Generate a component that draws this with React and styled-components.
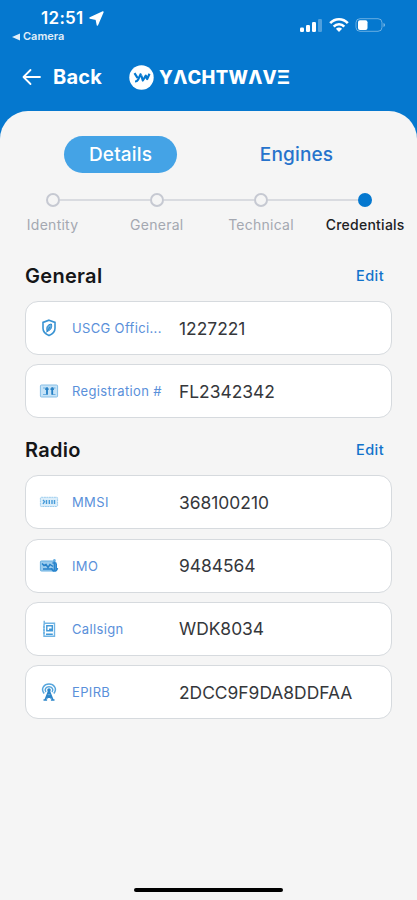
import React from 'react';
import styled, { createGlobalStyle } from 'styled-components';

const GlobalStyle = createGlobalStyle`
  * {
    box-sizing: border-box;
  }
  body {
    background-color: #f5f5f5;
    font-family: Inter, 'Liberation Sans', sans-serif;
    margin: 0;
  }
`;
const Screen = styled.div`
  background: linear-gradient(#0578cf 0, #0578cf 140px, #f5f5f5 140px);
  display: flex;
  flex-direction: column;
  height: 900px;
  overflow: hidden;
  width: 417px;
`;
const StatusBar = styled.div`
  color: #ffffff;
  display: flex;
  height: 48px;
  justify-content: space-between;
  padding: 8px 31px 0 12px;
`;
const Clock = styled.div`
  align-items: center;
  display: flex;
  font-size: 17px;
  font-weight: 600;
  gap: 5px;
  letter-spacing: 0.3px;
  line-height: 20px;
  padding-left: 29px;
`;
const ReturnLink = styled.div`
  align-items: center;
  display: flex;
  font-size: 11px;
  font-weight: 600;
  gap: 3px;
  line-height: 17px;
  opacity: 0.88;
`;
const StatusIcons = styled.div`
  align-items: center;
  display: flex;
  gap: 6px;
  height: 34px;
`;
const NavBar = styled.div`
  align-items: center;
  color: #ffffff;
  display: flex;
  height: 58px;
  padding-left: 22px;
`;
const BackLabel = styled.span`
  font-size: 20px;
  font-weight: 700;
  letter-spacing: 0.2px;
  margin: 0 27px 0 12px;
`;
const Wordmark = styled.span`
  font-size: 18.4px;
  font-weight: 800;
  letter-spacing: 0.3px;
  margin-left: 5px;
`;
const Sheet = styled.main`
  background-color: #f5f5f5;
  border-radius: 28px 28px 0 0;
  display: flex;
  flex: 1;
  flex-direction: column;
  margin-top: 5px;
  padding: 25px 25px 8px;
`;
const Tabs = styled.div`
  display: flex;
  gap: 63px;
  padding-left: 39px;
`;
const Tab = styled.div`
  background-color: ${props => props.$active ? '#44a3e6' : 'transparent'};
  border-radius: 19px;
  color: ${props => props.$active ? '#ffffff' : '#2673cc'};
  font-size: 19px;
  font-weight: 500;
  height: 37px;
  letter-spacing: 0.15px;
  line-height: 38px;
  text-align: center;
  width: 113px;
`;
const Steps = styled.div`
  display: grid;
  grid-template-columns: repeat(4, 104.2px);
  margin: 20px -25px 0 -24.5px;
`;
const Step = styled.div`
  align-items: center;
  color: ${props => props.$active ? '#202124' : '#a4a8b1'};
  display: flex;
  flex-direction: column;
  font-size: 14px;
  font-weight: ${props => props.$active ? 500 : 400};
  gap: 9px;
  letter-spacing: 0.25px;
  line-height: 18px;
`;
const StepTrack = styled.div`
  align-items: center;
  display: flex;
  width: 100%;
`;
const StepLine = styled.div`
  background-color: ${props => props.$hidden ? 'transparent' : '#d9dbe0'};
  flex: 1;
  height: 1.5px;
`;
const StepDot = styled.div`
  background-color: ${props => props.$active ? '#0578cf' : '#f5f5f5'};
  border: 2px solid ${props => props.$active ? '#0578cf' : '#c6c9d2'};
  border-radius: 50%;
  height: 14px;
  width: 14px;
`;
const Section = styled.section`
  margin-top: ${props => props.$first ? '27px' : '17px'};
`;
const SectionHead = styled.div`
  align-items: center;
  display: flex;
  height: 30px;
  justify-content: space-between;
  padding-right: 8px;
`;
const SectionTitle = styled.h2`
  color: #151618;
  font-size: 20px;
  font-weight: 600;
  letter-spacing: 0.3px;
  margin: 0;
`;
const Edit = styled.span`
  color: #1172cb;
  font-size: 14.5px;
  font-weight: 500;
  letter-spacing: 0.4px;
  line-height: 16px;
  padding-bottom: 1px;
`;
const Rows = styled.div`
  display: flex;
  flex-direction: column;
  gap: 9.3px;
  margin-top: 10px;
`;
const Row = styled.div`
  align-items: center;
  background-color: #ffffff;
  border: 1px solid #d6dade;
  border-radius: 13px;
  display: grid;
  grid-template-columns: 20px 106px 1fr;
  height: 54px;
  padding-left: 13px;
  width: 367px;
`;
const RowLabel = styled.span`
  color: #5a90da;
  font-size: 13px;
  letter-spacing: 0.35px;
  padding-left: 13px;
  white-space: nowrap;
`;
const RowValue = styled.span`
  color: #35373b;
  font-size: 17.4px;
  padding-left: 14px;
`;
const HomeIndicator = styled.div`
  align-self: center;
  background-color: #000000;
  border-radius: 2px;
  height: 4px;
  margin-top: auto;
  width: 149px;
`;

const Signal = () => (
  <svg width="23" height="16" viewBox="0 0 23 16" fill="#fff">
    <rect x="0" y="10.5" width="4" height="4.5" rx="1.2" />
    <rect x="6" y="8" width="4" height="7" rx="1.2" />
    <rect x="12" y="5" width="4" height="10" rx="1.2" />
    <rect x="18" y="2" width="4" height="13" rx="1.2" opacity="0.3" />
  </svg>
);

const Wifi = () => (
  <svg width="20" height="16" viewBox="0 0 20 16" fill="none" stroke="#fff" strokeWidth="2.6">
    <path d="M1.2 6.2C6 .9 14 .9 18.8 6.2M4.7 9.6c2.8-3.1 7.8-3.1 10.6 0" />
    <path d="M6.9 11.8c1.7-1.7 4.5-1.7 6.2 0L10 15z" fill="#fff" stroke="none" />
  </svg>
);

const Battery = () => (
  <svg width="31" height="16" viewBox="0 0 31 16">
    <rect x="1" y="1.7" width="26" height="12.6" rx="4" fill="none" stroke="#fff" opacity="0.4" />
    <rect x="3" y="3.2" width="9.5" height="9.8" rx="2" fill="#fff" />
    <path d="M28.5 6v4c2-.7 2-3.3 0-4z" fill="#fff" opacity="0.5" />
  </svg>
);

const LocationArrow = () => (
  <svg width="15" height="15" viewBox="0 0 15 15">
    <path d="M14 1 8.4 14 7.2 8.2 1 7z" fill="#fff" stroke="#fff" strokeWidth="1.4" strokeLinejoin="round" />
  </svg>
);

const BackArrow = () => (
  <svg width="19" height="18" viewBox="0 0 19 18" fill="none" stroke="#fff" strokeWidth="1.8" strokeLinecap="round" strokeLinejoin="round">
    <path d="M18 9H2M8.5 2 1.5 9l7 7" />
  </svg>
);

const Emblem = () => (
  <svg width="25" height="25" viewBox="0 0 25 25" fill="none">
    <circle cx="12.5" cy="12.5" r="12.2" fill="#fff" />
    <path d="m5.5 8.2 3 4.6M12 8.5l-3 6.2c-.7 1.4-1.7 1.8-3 1.8M12.3 10.5l1.5 5 3-4.8 1.4 3.3 2.3-5.2" stroke="#0578cf" strokeWidth="2.2" strokeLinejoin="round" />
  </svg>
);

const icons = {
  shield: (
    <>
      <path d="M10 2.2 16 4.4v5.8c0 3.8-3.4 6.3-6 7.4-2.6-1.1-6-3.6-6-7.4V4.4z" stroke="#3993d3" strokeWidth="1.6" />
      <path d="M12.4 6c-3.8.5-5.4 2.9-4.3 7.4 4-1.4 5.2-3.8 4.3-7.4zM7.3 14.5 11 9" fill="#64afe0" stroke="#2a86cb" />
    </>
  ),
  plate: (
    <>
      <rect x="1.4" y="4" width="17.2" height="12" rx="1" fill="#c6e3f7" stroke="#87bfe7" />
      <path d="M4 7h3M13.5 7h3M4 13.5h3M13.5 13.5h3" stroke="#6cb0e1" />
      <path d="M8 6.3v7.5M6.2 8.2h3.4M13.2 6.3v7.5M11.5 8.2h3.4" stroke="#257fc4" strokeWidth="1.8" />
    </>
  ),
  digits: (
    <>
      <rect x="1.4" y="5.3" width="17.2" height="9.2" rx="1" fill="#dceefa" stroke="#9dcdef" strokeDasharray="2 .5" />
      <path d="m4 8 1.5 1.5L4 12M7.5 8v4M10.3 8v4M13 8v4M15.5 8v4" stroke="#479bd9" strokeWidth="1.4" />
    </>
  ),
  imo: (
    <>
      <rect x="1.4" y="5" width="14.5" height="10" rx="1" fill="#9bcbed" stroke="#68afe1" />
      <path d="m3 7.5 2 2 2-1 2 3 2-3 3 2M4 13h9" stroke="#2680c8" strokeWidth="1.5" />
      <path d="M15.4 4.5v11.3M13.4 7h4M12.5 12c1 4 5 4 6 0M17.2 7.5v6" stroke="#2a85cd" strokeWidth="1.6" />
      <circle cx="15.4" cy="4.4" r="1.3" fill="#67afe2" />
    </>
  ),
  radio: (
    <>
      <path d="M5 17.3V5.5l1-1.3h9.5v13zM5.2 5V1.8M4 8h2M4 11h2M4 14h2" stroke="#70b4e4" strokeWidth="1.4" />
      <path d="M7.8 6.7h5.5v5H7.8zM10 10.3h3M7 15.2h6.8" stroke="#4299d8" strokeWidth="1.4" />
    </>
  ),
  beacon: (
    <>
      <path d="M5.2 11.5c-4-5 .2-9.4 4.8-9.4s8.8 4.4 4.8 9.4M7 10c-2.2-2.7.2-5.2 3-5.2s5.2 2.5 3 5.2" stroke="#56a5dc" strokeWidth="1.5" />
      <circle cx="10" cy="8" r="1.8" fill="#2b85c9" />
      <path d="m10 8-3.8 9.5M10 8l3.8 9.5M7.8 13l4.7 3.5M12.2 13l-4.7 3.5M4.5 18h3.6M11.9 18h3.6M10 9v5" stroke="#2b85c9" strokeWidth="1.4" />
    </>
  ),
};

const RowIcon = ({ name }) => (
  <svg width="20" height="20" viewBox="0 0 20 20" fill="none">{ icons[name] }</svg>
);

const steps = ['Identity', 'General', 'Technical', 'Credentials'];

const sections = [
  {
    title: 'General',
    rows: [
      { icon: 'shield', label: 'USCG Offici...', value: '1227221' },
      { icon: 'plate', label: 'Registration #', value: 'FL2342342' },
    ],
  },
  {
    title: 'Radio',
    rows: [
      { icon: 'digits', label: 'MMSI', value: '368100210' },
      { icon: 'imo', label: 'IMO', value: '9484564' },
      { icon: 'radio', label: 'Callsign', value: 'WDK8034' },
      { icon: 'beacon', label: 'EPIRB', value: '2DCC9F9DA8DDFAA' },
    ],
  },
];

const App = () => (
  <>
    <GlobalStyle />
    <Screen>
      <StatusBar>
        <div>
          <Clock>12:51 <LocationArrow /></Clock>
          <ReturnLink>
            <svg width="8" height="8" viewBox="0 0 8 8"><path d="M8 .5v7L0 4z" fill="#fff" /></svg>
            Camera
          </ReturnLink>
        </div>
        <StatusIcons>
          <Signal />
          <Wifi />
          <Battery />
        </StatusIcons>
      </StatusBar>
      <NavBar>
        <BackArrow />
        <BackLabel>Back</BackLabel>
        <Emblem />
        <Wordmark aria-label="YACHTWAVE">YΛCHTWΛVΞ</Wordmark>
      </NavBar>
      <Sheet>
        <Tabs>
          <Tab $active>Details</Tab>
          <Tab>Engines</Tab>
        </Tabs>
        <Steps>
          { steps.map((step, i) => (
            <Step key={ step } $active={ i === 3 }>
              <StepTrack>
                <StepLine $hidden={ i === 0 } />
                <StepDot $active={ i === 3 } />
                <StepLine $hidden={ i === 3 } />
              </StepTrack>
              { step }
            </Step>
          ))}
        </Steps>
        { sections.map((section, i) => (
          <Section key={ section.title } $first={ i === 0 }>
            <SectionHead>
              <SectionTitle>{ section.title }</SectionTitle>
              <Edit>Edit</Edit>
            </SectionHead>
            <Rows>
              { section.rows.map(row => (
                <Row key={ row.label }>
                  <RowIcon name={ row.icon } />
                  <RowLabel>{ row.label }</RowLabel>
                  <RowValue>{ row.value }</RowValue>
                </Row>
              ))}
            </Rows>
          </Section>
        ))}
        <HomeIndicator />
      </Sheet>
    </Screen>
  </>
)

export default App;
